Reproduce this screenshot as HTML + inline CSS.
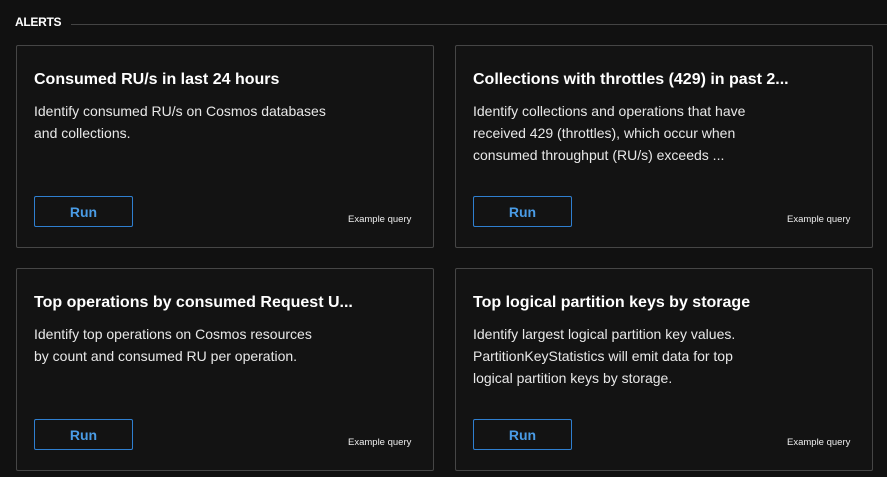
<!DOCTYPE html><html><head><style>
body{margin:0;width:887px;height:477px;background:#111111;font-family:"Liberation Sans",sans-serif;color:#fff;position:relative;overflow:hidden}
.h{position:absolute;left:15px;top:15px;font-size:12px;font-weight:bold;letter-spacing:-0.3px}
.line{position:absolute;left:71px;right:0;top:24px;height:1px;background:#444}
.c{position:absolute;width:416px;height:201px;border:1px solid #464646;border-radius:2px;background:#131313}
.t{position:absolute;left:17px;top:25px;font-size:16px;font-weight:bold;white-space:nowrap}
.d{position:absolute;left:17px;top:54px;width:380px;font-size:14px;line-height:22px;color:#e8e8e8;white-space:nowrap}
.b{position:absolute;left:17px;top:150px;width:97px;height:29px;border:1px solid #2f7fd0;border-radius:2px;color:#4a9ce6;font-size:14px;font-weight:bold;text-align:center;line-height:31px}
.e{position:absolute;left:331px;top:168px;font-size:9.5px;color:#eee}
</style></head><body>
<div class="h">ALERTS</div><div class="line"></div>
<div class="c" style="left:16px;top:45px"><div class="t">Consumed RU/s in last 24 hours</div><div class="d">Identify consumed RU/s on Cosmos databases<br>and collections.</div><div class="b">Run</div><div class="e">Example query</div></div>
<div class="c" style="left:455px;top:45px"><div class="t">Collections with throttles (429) in past 2...</div><div class="d">Identify collections and operations that have<br>received 429 (throttles), which occur when<br>consumed throughput (RU/s) exceeds ...</div><div class="b">Run</div><div class="e">Example query</div></div>
<div class="c" style="left:16px;top:268px"><div class="t">Top operations by consumed Request U...</div><div class="d">Identify top operations on Cosmos resources<br>by count and consumed RU per operation.</div><div class="b">Run</div><div class="e">Example query</div></div>
<div class="c" style="left:455px;top:268px"><div class="t">Top logical partition keys by storage</div><div class="d">Identify largest logical partition key values.<br>PartitionKeyStatistics will emit data for top<br>logical partition keys by storage.</div><div class="b">Run</div><div class="e">Example query</div></div>
</body></html>
